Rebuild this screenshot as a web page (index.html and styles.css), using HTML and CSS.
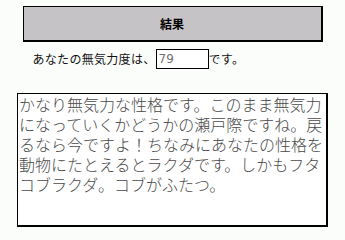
FILE: index.html
```html
<!DOCTYPE html>
<html lang="ja">
<head>
<meta charset="utf-8">
<title>結果</title>
<link rel="stylesheet" href="styles.css">
</head>
<body>
<div class="page">
  <div class="result-head">結果</div>
  <div class="score-row"><span class="label">あなたの無気力度は、</span><input class="score" type="text" value="79" readonly><span class="label">です。</span></div>
  <div class="comment">かなり無気力な性格です。このまま無気力になっていくかどうかの瀬戸際ですね。戻るなら今ですよ！ちなみにあなたの性格を動物にたとえるとラクダです。しかもフタコブラクダ。コブがふたつ。</div>
</div>
</body>
</html>
```
FILE: styles.css
```css
html, body {
  margin: 0;
  padding: 0;
  background: #fbfdfb;
}
body {
  font-family: "Noto Sans CJK JP", "Noto Sans", sans-serif;
  color: #000;
}
.page {
  display: flex;
  flex-direction: column;
  align-items: center;
  padding-top: 6px;
}
.result-head {
  box-sizing: border-box;
  width: 300px;
  height: 36px;
  border: 1px solid #000;
  border-right-width: 2px;
  border-bottom-width: 2px;
  background: #c6c3c6;
  display: flex;
  align-items: center;
  justify-content: center;
  font-size: 12px;
  font-weight: bold;
}
.score-row {
  box-sizing: border-box;
  width: 300px;
  height: 20px;
  margin-top: 7px;
  padding-left: 10px;
  display: flex;
  align-items: center;
  font-size: 12px;
  letter-spacing: 0.3px;
}
.label {
  line-height: 20px;
  color: #111;
}
.score {
  box-sizing: border-box;
  width: 53px;
  height: 20px;
  margin: 0;
  padding: 0 0 0 2px;
  border: 1px solid #000;
  background: #fff;
  color: #707070;
  font-family: "DejaVu Sans", sans-serif;
  font-size: 12px;
  letter-spacing: 0;
  outline: none;
}
.comment {
  box-sizing: border-box;
  width: 311px;
  height: 134px;
  margin-top: 24px;
  border: 1px solid #000;
  border-right-width: 2px;
  border-bottom-width: 2px;
  background: #fff;
  padding: 0 0 0 1px;
  font-size: 16px;
  font-weight: 300;
  line-height: 20px;
  color: #4a4a4a;
  overflow: hidden;
}
```
